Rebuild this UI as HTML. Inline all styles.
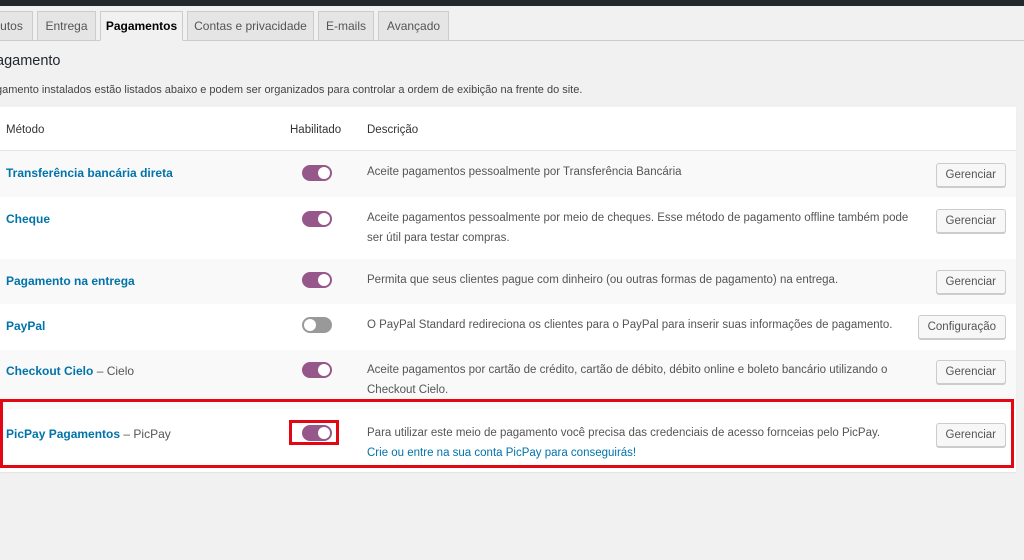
<!DOCTYPE html>
<html><head><meta charset="utf-8"><style>
*{margin:0;padding:0;box-sizing:border-box}
body{width:1024px;height:560px;background:#f1f1f1;font-family:"Liberation Sans",sans-serif;font-size:12px;color:#444;position:relative;overflow:hidden}
.top{position:absolute;left:0;top:0;width:1024px;height:6px;background:#23282d}
.tab{position:absolute;top:11px;height:30px;border:1px solid #ccc;background:#e5e5e5;color:#555;font-size:12px;line-height:28px;text-align:center}
.tab.a{background:#f1f1f1;border-bottom-color:#f1f1f1;color:#000;font-weight:bold}
.line{position:absolute;left:0;top:40px;width:1024px;height:1px;background:#ccc}
h2{position:absolute;left:-4px;top:53px;font-size:14.5px;font-weight:normal;color:#23282d}
.p{position:absolute;left:-4px;top:84px;font-size:11px;color:#444}
.tbl{position:absolute;left:0;top:107px;width:1016px;height:365px;background:#fff;box-shadow:0 1px 1px rgba(0,0,0,.06)}
.row{position:absolute;left:0;width:1016px}
.alt{background:#f9f9f9}
.hd{position:absolute;top:17px;font-size:11.5px;color:#333}
.m{position:absolute;left:6px;font-weight:bold;color:#0073aa;font-size:12px}
.m span{font-weight:normal;color:#555}
.d{position:absolute;left:367px;color:#555;font-size:11.5px;line-height:20px;width:548px}
.tg{position:absolute;left:302px;width:30px;height:16px;border-radius:8px;background:#96588a}
.tg:after{content:"";position:absolute;right:2px;top:2px;width:12px;height:12px;border-radius:50%;background:#fff}
.tg.off{background:#999}.tg.off:after{right:auto;left:2px}
.btn{position:absolute;right:10px;height:24px;border:1px solid #ccc;background:#f7f7f7;border-radius:3px;box-shadow:0 1px 0 #ccc;font-size:11.5px;color:#555;line-height:22px;padding:0 9px}
.red{position:absolute;border:3px solid #e30613}
</style></head><body>
<div class="top"></div>
<div class="tab" style="left:-10px;width:43px">utos</div>
<div class="tab" style="left:37px;width:59px">Entrega</div>
<div class="tab" style="left:187px;width:127px">Contas e privacidade</div>
<div class="tab" style="left:318px;width:56px">E-mails</div>
<div class="tab" style="left:378px;width:71px">Avançado</div>
<div class="line"></div>
<div class="tab a" style="left:100px;width:83px">Pagamentos</div>
<h2>agamento</h2>
<div class="p">gamento instalados estão listados abaixo e podem ser organizados para controlar a ordem de exibição na frente do site.</div>
<div class="tbl">
 <div class="row" style="top:0;height:44px;border-bottom:1px solid #e5e5e5">
  <div class="hd" style="left:6px">Método</div><div class="hd" style="left:290px">Habilitado</div><div class="hd" style="left:367px">Descrição</div>
 </div>
 <div class="row alt" style="top:44px;height:46px">
  <div class="m" style="top:15px">Transferência bancária direta</div><div class="tg" style="top:14px"></div>
  <div class="d" style="top:11px">Aceite pagamentos pessoalmente por Transferência Bancária</div>
  <div class="btn" style="top:12px">Gerenciar</div></div>
 <div class="row" style="top:90px;height:62px">
  <div class="m" style="top:15px">Cheque</div><div class="tg" style="top:14px"></div>
  <div class="d" style="top:11px">Aceite pagamentos pessoalmente por meio de cheques. Esse método de pagamento offline também pode ser útil para testar compras.</div>
  <div class="btn" style="top:12px">Gerenciar</div></div>
 <div class="row alt" style="top:152px;height:45px">
  <div class="m" style="top:15px">Pagamento na entrega</div><div class="tg" style="top:13px"></div>
  <div class="d" style="top:11px">Permita que seus clientes pague com dinheiro (ou outras formas de pagamento) na entrega.</div>
  <div class="btn" style="top:11px">Gerenciar</div></div>
 <div class="row" style="top:197px;height:46px">
  <div class="m" style="top:15px">PayPal</div><div class="tg off" style="top:13px"></div>
  <div class="d" style="top:11px">O PayPal Standard redireciona os clientes para o PayPal para inserir suas informações de pagamento.</div>
  <div class="btn" style="top:11px">Configuração</div></div>
 <div class="row alt" style="top:243px;height:59px">
  <div class="m" style="top:14px">Checkout Cielo <span>– Cielo</span></div><div class="tg" style="top:12px"></div>
  <div class="d" style="top:10px">Aceite pagamentos por cartão de crédito, cartão de débito, débito online e boleto bancário utilizando o Checkout Cielo.</div>
  <div class="btn" style="top:10px">Gerenciar</div></div>
 <div class="row" style="top:302px;height:63px">
  <div class="m" style="top:18px">PicPay Pagamentos <span>– PicPay</span></div><div class="tg" style="top:16px"></div>
  <div class="d" style="top:14px">Para utilizar este meio de pagamento você precisa das credenciais de acesso fornceias pelo PicPay.<br><span style="color:#0073aa">Crie ou entre na sua conta PicPay para conseguirás!</span></div>
  <div class="btn" style="top:14px">Gerenciar</div></div>
</div>
<div class="red" style="left:0;top:399px;width:1014px;height:69px"></div>
<div class="red" style="left:289px;top:420px;width:50px;height:25px"></div>
</body></html>
